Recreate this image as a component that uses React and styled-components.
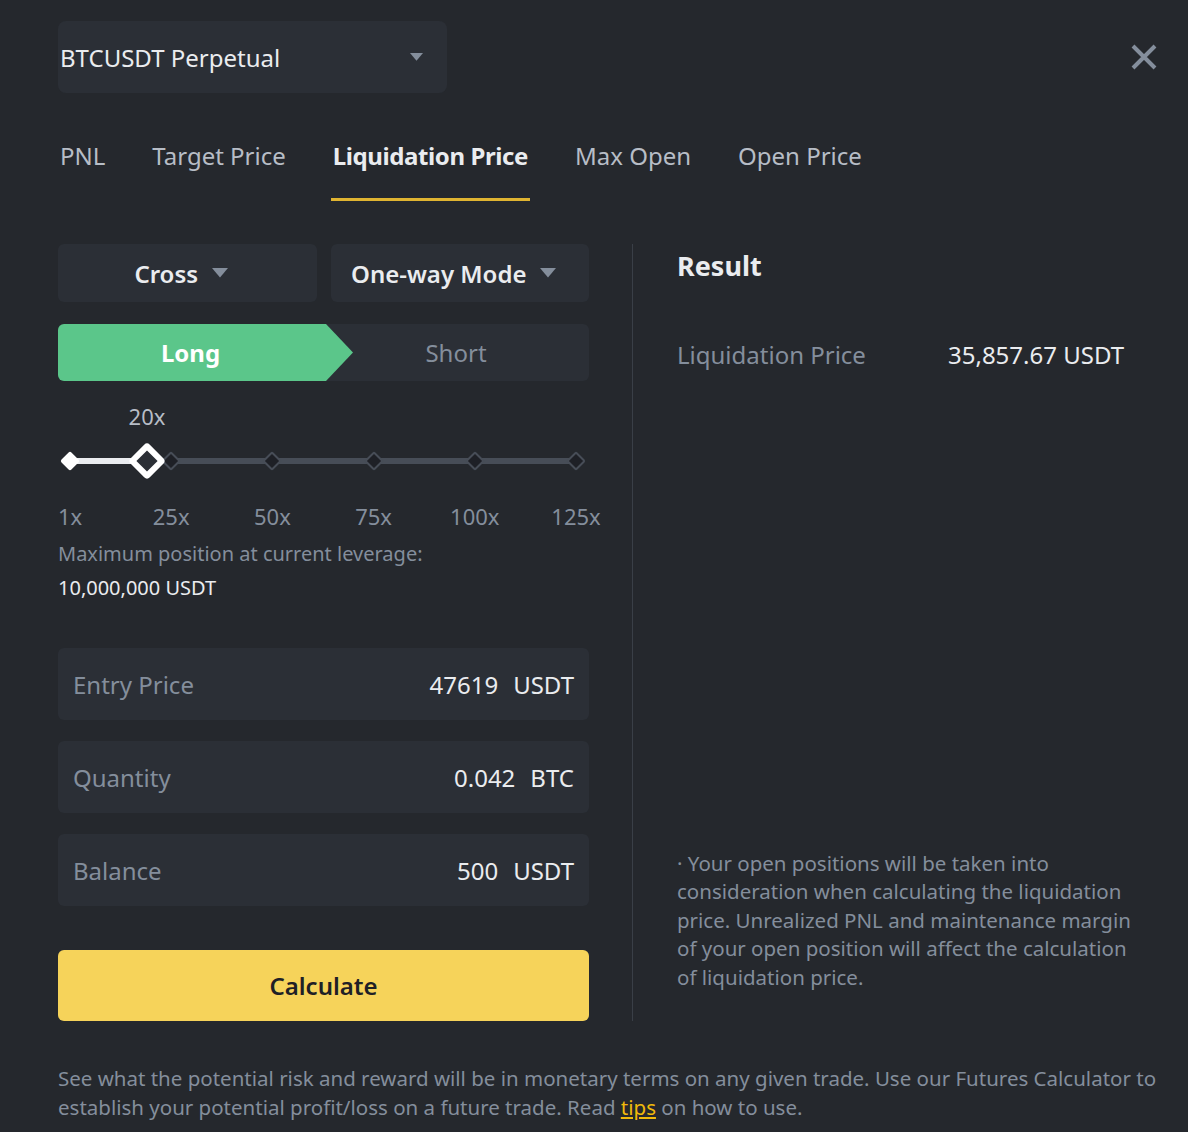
import React from "react";
import styled, { createGlobalStyle } from "styled-components";

const GlobalStyle = createGlobalStyle`
  body {
    margin: 0;
    background: #25282d;
    font-family: "Noto Sans", "Liberation Sans", sans-serif;
    color: #eaecef;
  }
`;

const tabs = ["PNL", "Target Price", "Liquidation Price", "Max Open", "Open Price"];
const marks = ["1x", "25x", "50x", "75x", "100x", "125x"];
const fields = [
  { label: "Entry Price", value: "47619", unit: "USDT" },
  { label: "Quantity", value: "0.042", unit: "BTC" },
  { label: "Balance", value: "500", unit: "USDT" },
];

const TRACK = 506;
const STEP = TRACK / 5;
const leverage = 20;

function Caret({ size = 14 }) {
  return (
    <svg width={size} height={size * 0.6} viewBox="0 0 10 6">
      <path d="M0 0h10L5 6z" fill="#848e9c" />
    </svg>
  );
}

export default function App() {
  const thumbX = ((leverage - 1) / 25) * STEP;
  return (
    <Page>
      <GlobalStyle />
      <Header>
        <SymbolSelect>
          <span>BTCUSDT Perpetual</span>
          <Caret size={13} />
        </SymbolSelect>
        <CloseBtn>
          <svg width="28" height="28" viewBox="0 0 28 28">
            <path d="M3 3l22 22M25 3L3 25" stroke="#848e9c" strokeWidth="4" />
          </svg>
        </CloseBtn>
      </Header>

      <Tabs>
        {tabs.map((t) => (
          <Tab key={t} $active={t === "Liquidation Price"}>
            {t}
          </Tab>
        ))}
      </Tabs>

      <Body>
        <LeftCol>
          <SelectRow>
            <ModeSelect>
              Cross <Caret size={16} />
            </ModeSelect>
            <ModeSelect>
              One-way Mode <Caret size={16} />
            </ModeSelect>
          </SelectRow>

          <SideToggle>
            <LongBtn>Long</LongBtn>
            <ShortBtn>Short</ShortBtn>
          </SideToggle>

          <Slider>
            <Track>
              <ActiveTrack style={{ width: thumbX }} />
              {marks.map((m, i) => (
                <Mark key={m} $on={i === 0} style={{ left: i * STEP }} />
              ))}
              <Thumb style={{ left: thumbX }}>
                <ThumbLabel>{leverage}x</ThumbLabel>
              </Thumb>
            </Track>
            <MarkLabels>
              {marks.map((m, i) => (
                <MarkLabel key={m} style={{ left: i * STEP }}>
                  {m}
                </MarkLabel>
              ))}
            </MarkLabels>
          </Slider>

          <MaxInfo>Maximum position at current leverage:</MaxInfo>
          <MaxValue>10,000,000 USDT</MaxValue>

          <Fields>
            {fields.map((f) => (
              <Field key={f.label}>
                <FieldLabel>{f.label}</FieldLabel>
                <FieldValue>
                  {f.value}
                  <Unit>{f.unit}</Unit>
                </FieldValue>
              </Field>
            ))}
          </Fields>

          <CalcButton>Calculate</CalcButton>
        </LeftCol>

        <Divider />

        <RightCol>
          <ResultTitle>Result</ResultTitle>
          <ResultRow>
            <ResultLabel>Liquidation Price</ResultLabel>
            <ResultValue>35,857.67 USDT</ResultValue>
          </ResultRow>
          <Note>
            · Your open positions will be taken into consideration when calculating the
            liquidation price. Unrealized PNL and maintenance margin of your open position
            will affect the calculation of liquidation price.
          </Note>
        </RightCol>
      </Body>

      <Footer>
        See what the potential risk and reward will be in monetary terms on any given trade.
        Use our Futures Calculator to establish your potential profit/loss on a future trade.
        Read <TipsLink href="#tips">tips</TipsLink> on how to use.
      </Footer>
    </Page>
  );
}

const Page = styled.div`
  padding: 21px 30px 20px 58px;
  width: 1100px;
`;

const Header = styled.div`
  display: flex;
  justify-content: space-between;
  align-items: center;
`;

const SymbolSelect = styled.div`
  width: 389px;
  height: 72px;
  box-sizing: border-box;
  padding: 0 24px 0 2px;
  background: #2b2f36;
  border-radius: 8px;
  display: flex;
  align-items: center;
  justify-content: space-between;
  font-size: 24px;
  color: #eaecef;
`;

const CloseBtn = styled.div`
  display: flex;
`;

const Tabs = styled.div`
  display: flex;
  gap: 43px;
  margin-top: 33px;
`;

const Tab = styled.div`
  padding: 14px 2px 0;
  height: 75px;
  box-sizing: border-box;
  font-size: 24px;
  line-height: 32px;
  font-weight: ${(p) => (p.$active ? 700 : 400)};
  letter-spacing: ${(p) => (p.$active ? "-0.4px" : "0")};
  color: ${(p) => (p.$active ? "#eaecef" : "#b7bdc6")};
  border-bottom: 3px solid ${(p) => (p.$active ? "#e0b431" : "transparent")};
`;

const Body = styled.div`
  display: flex;
  margin-top: 43px;
`;

const LeftCol = styled.div`
  width: 531px;
  display: flex;
  flex-direction: column;
`;

const SelectRow = styled.div`
  display: grid;
  grid-template-columns: 1fr 1fr;
  gap: 14px;
`;

const ModeSelect = styled.div`
  height: 58px;
  padding-right: 12px;
  background: #2b2f36;
  border-radius: 6px;
  display: flex;
  align-items: center;
  justify-content: center;
  gap: 14px;
  font-size: 24px;
  font-weight: 600;
  color: #eaecef;
`;

const SideToggle = styled.div`
  display: flex;
  margin-top: 22px;
  height: 57px;
  background: #2b2f36;
  border-radius: 6px;
`;

const LongBtn = styled.div`
  width: 295px;
  flex-shrink: 0;
  background: #5bc68a;
  border-radius: 6px 0 0 6px;
  clip-path: polygon(0 0, 268px 0, 100% 50%, 268px 100%, 0 100%);
  display: flex;
  align-items: center;
  justify-content: center;
  padding-right: 30px;
  box-sizing: border-box;
  font-size: 24px;
  font-weight: 700;
  color: #ffffff;
`;

const ShortBtn = styled.div`
  flex: 1;
  margin-left: -30px;
  display: flex;
  align-items: center;
  justify-content: center;
  font-size: 24px;
  color: #848e9c;
`;

const Slider = styled.div`
  margin-top: 22px;
  padding: 0 13px 0 12px;
`;

const Track = styled.div`
  position: relative;
  height: 6px;
  margin-top: 55px;
  background: #474d57;
`;

const ActiveTrack = styled.div`
  position: absolute;
  left: 0;
  top: 0;
  height: 6px;
  background: #eaecef;
`;

const Mark = styled.div`
  position: absolute;
  top: 3px;
  width: 14px;
  height: 14px;
  box-sizing: border-box;
  border: 2.5px solid ${(p) => (p.$on ? "#ffffff" : "#474d57")};
  background: ${(p) => (p.$on ? "#ffffff" : "#1e2026")};
  transform: translate(-50%, -50%) rotate(45deg);
  border-radius: 2px;
`;

const Thumb = styled.div`
  position: absolute;
  top: 3px;
  width: 27px;
  height: 27px;
  box-sizing: border-box;
  border: 6px solid #ffffff;
  background: #2b2f36;
  border-radius: 4px;
  transform: translate(-50%, -50%) rotate(45deg);
`;

const ThumbLabel = styled.div`
  position: absolute;
  left: 50%;
  top: 50%;
  transform: rotate(-45deg) translate(-50%, -61px);
  transform-origin: 0 0;
  font-size: 22px;
  color: #b7bdc6;
  white-space: nowrap;
`;

const MarkLabels = styled.div`
  position: relative;
  height: 30px;
  margin-top: 37px;
`;

const MarkLabel = styled.span`
  position: absolute;
  top: 0;
  transform: translateX(-50%);
  font-size: 22px;
  line-height: 30px;
  color: #848e9c;
`;

const MaxInfo = styled.div`
  margin-top: 8px;
  font-size: 20px;
  line-height: 30px;
  color: #848e9c;
`;

const MaxValue = styled.div`
  margin-top: 4px;
  font-size: 20px;
  line-height: 30px;
  color: #eaecef;
`;

const Fields = styled.div`
  display: flex;
  flex-direction: column;
  gap: 21px;
  margin-top: 45px;
`;

const Field = styled.div`
  height: 72px;
  background: #2b2f36;
  border-radius: 6px;
  padding: 0 15px;
  display: flex;
  align-items: center;
  justify-content: space-between;
`;

const FieldLabel = styled.span`
  font-size: 24px;
  color: #848e9c;
`;

const FieldValue = styled.span`
  font-size: 24px;
  color: #eaecef;
`;

const Unit = styled.span`
  margin-left: 15px;
`;

const CalcButton = styled.button`
  margin-top: 44px;
  height: 71px;
  border: none;
  border-radius: 6px;
  background: #f6d35a;
  font-family: inherit;
  font-size: 24px;
  font-weight: 600;
  color: #1e2026;
`;

const Divider = styled.div`
  width: 1px;
  background: #3a3f47;
  margin: 0 44px 0 43px;
`;

const RightCol = styled.div`
  flex: 1;
  display: flex;
  flex-direction: column;
  padding-bottom: 30px;
`;

const ResultTitle = styled.div`
  margin-top: 4px;
  font-size: 27px;
  line-height: 36px;
  font-weight: 700;
  color: #eaecef;
`;

const ResultRow = styled.div`
  display: flex;
  margin-top: 55px;
  font-size: 24px;
  line-height: 32px;
`;

const ResultLabel = styled.span`
  width: 271px;
  color: #848e9c;
`;

const ResultValue = styled.span`
  color: #eaecef;
`;

const Note = styled.p`
  margin: auto 0 0;
  max-width: 458px;
  font-size: 20.5px;
  line-height: 28.5px;
  color: #848e9c;
`;

const Footer = styled.p`
  margin: 43px 0 0;
  font-size: 20.5px;
  line-height: 29px;
  color: #848e9c;
`;

const TipsLink = styled.a`
  color: #f0b90b;
  text-decoration: underline;
`;
